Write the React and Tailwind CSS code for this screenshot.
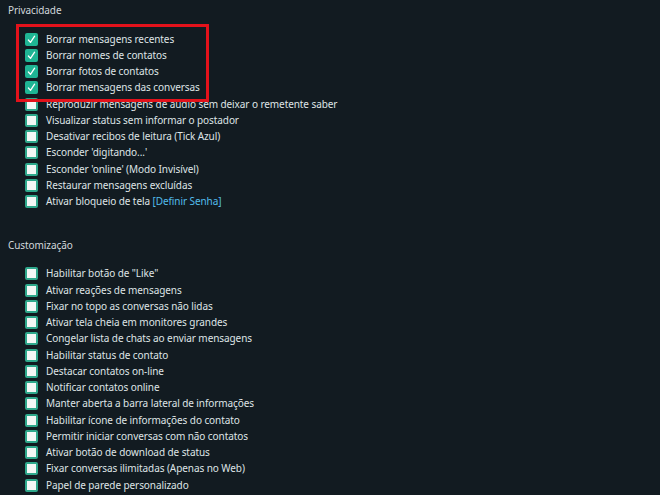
import { useState } from "react";

const privacy = [
  { label: "Borrar mensagens recentes", checked: true },
  { label: "Borrar nomes de contatos", checked: true },
  { label: "Borrar fotos de contatos", checked: true },
  { label: "Borrar mensagens das conversas", checked: true },
  { label: "Reproduzir mensagens de áudio sem deixar o remetente saber" },
  { label: "Visualizar status sem informar o postador" },
  { label: "Desativar recibos de leitura (Tick Azul)" },
  { label: "Esconder 'digitando...'" },
  { label: "Esconder 'online' (Modo Invisível)" },
  { label: "Restaurar mensagens excluídas" },
  { label: "Ativar bloqueio de tela", link: "[Definir Senha]" },
];

const custom = [
  'Habilitar botão de "Like"',
  "Ativar reações de mensagens",
  "Fixar no topo as conversas não lidas",
  "Ativar tela cheia em monitores grandes",
  "Congelar lista de chats ao enviar mensagens",
  "Habilitar status de contato",
  "Destacar contatos on-line",
  "Notificar contatos online",
  "Manter aberta a barra lateral de informações",
  "Habilitar ícone de informações do contato",
  "Permitir iniciar conversas com não contatos",
  "Ativar botão de download de status",
  "Fixar conversas ilimitadas (Apenas no Web)",
  "Papel de parede personalizado",
].map((label) => ({ label }));

function Check({ checked, onToggle }) {
  return (
    <button
      type="button"
      onClick={onToggle}
      className={
        checked
          ? "flex h-[13px] w-[13px] shrink-0 items-center justify-center rounded-[2px] bg-[#1fb594]"
          : "h-[13px] w-[13px] shrink-0 rounded-[2px] border-2 border-[#2fa88c] bg-[#f4f7f6]"
      }
    >
      {checked ? (
        <svg viewBox="0 0 12 12" className="h-[11px] w-[11px]" fill="none">
          <path d="M2.6 6.6 4.9 9.2 9.4 2.4" stroke="#ffffff" strokeWidth="1.4" strokeLinecap="round" strokeLinejoin="round" />
        </svg>
      ) : null}
    </button>
  );
}

function Section({ title, items, className }) {
  const [state, setState] = useState(items.map((i) => Boolean(i.checked)));

  return (
    <section className={className}>
      <h2 className="h-4 leading-4 text-[#d1d7db]">{title}</h2>
      <ul className="mt-[13px] pl-[17px]">
        {items.map((item, idx) => (
          <li key={item.label} className="flex h-[16.25px] items-center gap-2">
            <Check
              checked={state[idx]}
              onToggle={() => setState((s) => s.map((v, j) => (j === idx ? !v : v)))}
            />
            <span className="whitespace-nowrap text-[#dfe4e6]">
              {item.label}
              {item.link ? <span className="text-[#53bdeb]"> {item.link}</span> : null}
            </span>
          </li>
        ))}
      </ul>
    </section>
  );
}

export default function App() {
  return (
    <div
      className="relative h-[495px] w-[660px] overflow-hidden bg-[#121b21] pl-2 pt-[2px] text-[10px] tracking-[-0.08px]"
      style={{ fontFamily: '"Noto Sans", "Open Sans", sans-serif' }}
    >
      <Section title="Privacidade" items={privacy} />
      <Section title="Customização" items={custom} className="mt-[27px]" />
      {/* highlight annotation */}
      <div className="pointer-events-none absolute left-[16px] top-[24px] h-[78px] w-[193px] border-[3px] border-[#e3121b]" />
    </div>
  );
}
